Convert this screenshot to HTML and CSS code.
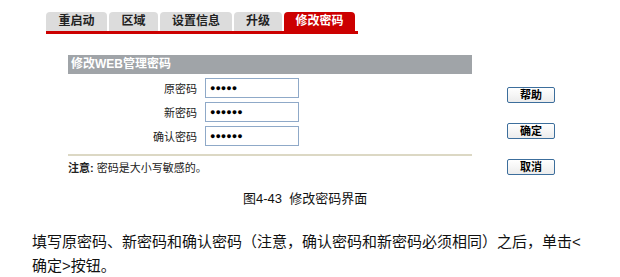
FILE: index.html
```html
<!DOCTYPE html>
<html lang="zh-CN">
<head>
  <meta charset="UTF-8">
  <title>修改密码</title>
  <link rel="stylesheet" href="styles.css">
</head>
<body>

  <!-- Tabs -->
  <div class="tabs">
    <div class="tab" style="width: 61px;">重启动</div>
    <div class="tab" style="width: 49px;">区域</div>
    <div class="tab" style="width: 72px;">设置信息</div>
    <div class="tab" style="width: 48px;">升级</div>
    <div class="tab active" style="width: 71px;">修改密码</div>
  </div>

  <!-- Password form -->
  <div class="content">
    <div class="form">
      <div class="form-title">修改WEB管理密码</div>
      <div class="row">
        <label>原密码</label>
        <div class="input">●●●●●</div>
      </div>
      <div class="row">
        <label>新密码</label>
        <div class="input">●●●●●●</div>
      </div>
      <div class="row">
        <label>确认密码</label>
        <div class="input">●●●●●●</div>
      </div>
      <div class="divider"></div>
      <div class="note"><b>注意:</b> 密码是大小写敏感的。</div>
    </div>
    <div class="buttons">
      <button class="btn">帮助</button>
      <button class="btn">确定</button>
      <button class="btn">取消</button>
    </div>
  </div>

  <div class="caption">图4-43&nbsp; 修改密码界面</div>

  <p class="text">填写原密码、新密码和确认密码（注意，确认密码和新密码必须相同）之后，单击&lt;<br>确定&gt;按钮。</p>

</body>
</html>
```

FILE: styles.css
```css
* {
  margin: 0;
  padding: 0;
  box-sizing: border-box;
}

body {
  background-color: #fff;
  color: #000;
  font-family: "Liberation Sans", "Noto Sans CJK SC", sans-serif;
}

/* Tabs */
.tabs {
  display: flex;
  gap: 2px;
  margin: 12px 0 0 46px;
  width: 312px;
  border-bottom: 3px solid #cc0000;
}

.tab {
  height: 19px;
  line-height: 19px;
  text-align: center;
  font-size: 12px;
  font-weight: bold;
  color: #222;
  background-color: #dcdcdc;
  border-radius: 4px 4px 0 0;
}

.tab.active {
  background-color: #cc0000;
  color: #fff;
}

/* Form area */
.content {
  display: flex;
  margin: 21px 0 0 68px;
}

.form {
  width: 404px;
}

.form-title {
  height: 19px;
  line-height: 19px;
  padding-left: 3px;
  background-color: #a0a4a8;
  color: #fff;
  font-size: 12px;
  font-weight: bold;
}

.row {
  display: flex;
  align-items: center;
  margin-top: 4px;
  height: 20px;
}

.row label {
  width: 129px;
  text-align: right;
  font-size: 11px;
  color: #222;
}

.input {
  margin-left: 8px;
  width: 94px;
  height: 20px;
  line-height: 18px;
  padding-left: 4px;
  border: 1px solid #8fa9c8;
  font-size: 9px;
}

.divider {
  margin-top: 8px;
  height: 2px;
  background-color: #dcd8c4;
}

.note {
  margin-top: 3px;
  font-size: 11px;
  color: #222;
}

.buttons {
  display: flex;
  flex-direction: column;
  gap: 20px;
  margin: 32px 0 0 35px;
}

.btn {
  width: 48px;
  height: 16px;
  font-family: "Liberation Sans", "Noto Sans CJK SC", sans-serif;
  font-size: 11px;
  font-weight: bold;
  line-height: 12px;
  color: #000;
  background: linear-gradient(#fff, #ececec);
  border: 1px solid #3c6e9c;
  border-radius: 2px;
}

.caption {
  margin-top: 13px;
  padding-left: 243px;
  font-size: 13px;
  color: #111;
}

.text {
  margin: 23px 0 0 32px;
  font-size: 15px;
  line-height: 24px;
  color: #111;
}
```
